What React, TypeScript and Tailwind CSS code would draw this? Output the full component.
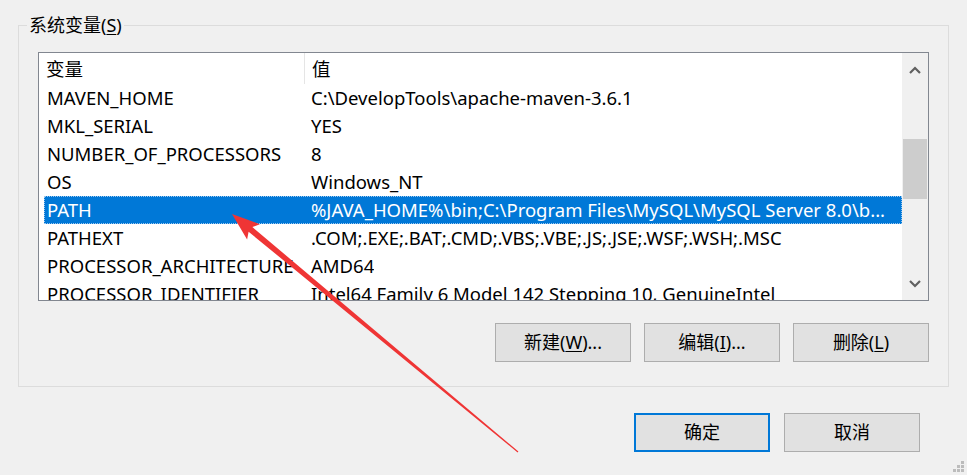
import React from 'react';

const rows: [string, string][] = [
  ['MAVEN_HOME', 'C:\\DevelopTools\\apache-maven-3.6.1'],
  ['MKL_SERIAL', 'YES'],
  ['NUMBER_OF_PROCESSORS', '8'],
  ['OS', 'Windows_NT'],
  ['PATH', '%JAVA_HOME%\\bin;C:\\Program Files\\MySQL\\MySQL Server 8.0\\b...'],
  ['PATHEXT', '.COM;.EXE;.BAT;.CMD;.VBS;.VBE;.JS;.JSE;.WSF;.WSH;.MSC'],
  ['PROCESSOR_ARCHITECTURE', 'AMD64'],
  ['PROCESSOR_IDENTIFIER', 'Intel64 Family 6 Model 142 Stepping 10, GenuineIntel'],
];

function Button({ children, primary }: { children: React.ReactNode; primary?: boolean }) {
  return (
    <button
      className={
        primary
          ? 'w-[136px] h-[39px] bg-[#e1e1e1] border-2 border-[#0078d7] text-[18px] text-black flex items-center justify-center'
          : 'w-[136px] h-[39px] bg-[#e1e1e1] border border-[#adadad] text-[18px] text-black flex items-center justify-center'
      }
    >
      {children}
    </button>
  );
}

export default function App() {
  return (
    <div
      className="relative w-[967px] h-[475px] bg-[#f0f0f0] overflow-hidden text-black"
      style={{ fontFamily: '"Noto Sans", "Noto Sans CJK SC", sans-serif' }}
    >
      {/* 系统变量 group box */}
      <fieldset className="ml-[18px] mt-[14px] w-[930px] h-[373px] border border-[#dcdcdc] px-[19px] pb-0 pt-0">
        <legend className="-ml-[11px] px-[2px] text-[18px] leading-[22px]">
          系统变量(<span className="underline underline-offset-2">S</span>)
        </legend>

        <div className="mt-[16px] w-[891px] h-[249px] border border-[#828790] bg-white flex overflow-hidden">
          <div className="flex-1 flex flex-col">
            <div className="h-[31px] shrink-0 flex text-[18.5px]">
              <div className="w-[266px] pl-[7px] flex items-center border-r border-[#e5e5e5]">变量</div>
              <div className="pl-[7px] flex items-center">值</div>
            </div>
            <div className="flex-1 overflow-hidden pl-[5px]">
              {rows.map(([k, v]) => {
                const sel = k === 'PATH';
                return (
                  <div
                    key={k}
                    className={
                      sel
                        ? 'h-[28px] flex items-center text-[18.5px] whitespace-nowrap bg-[#0078d7] text-white outline-1 outline-dotted outline-offset-[-1px] outline-[#9cc8f0]'
                        : 'h-[28px] flex items-center text-[18.5px] whitespace-nowrap'
                    }
                  >
                    <div className="w-[261px] pl-[3px] shrink-0 overflow-hidden">{k}</div>
                    <div className="pl-[6px] overflow-hidden">{v}</div>
                  </div>
                );
              })}
            </div>
          </div>

          {/* scrollbar */}
          <div className="w-[26px] shrink-0 bg-[#f0f0f0] flex flex-col items-center">
            <div className="h-[34px] w-full flex items-center justify-center">
              <svg width="12" height="8" viewBox="0 0 12 8">
                <path d="M1 7 L6 2 L11 7" stroke="#606060" strokeWidth="2.2" fill="none" />
              </svg>
            </div>
            <div className="mt-[52px] w-[24px] h-[60px] bg-[#cdcdcd]" />
            <div className="flex-1" />
            <div className="h-[32px] w-full flex items-center justify-center">
              <svg width="12" height="8" viewBox="0 0 12 8">
                <path d="M1 1 L6 6 L11 1" stroke="#606060" strokeWidth="2.2" fill="none" />
              </svg>
            </div>
          </div>
        </div>

        <div className="mt-[22px] w-[891px] flex justify-end gap-[13px]">
          <Button>
            新建(<span className="underline underline-offset-2">W</span>)...
          </Button>
          <Button>
            编辑(<span className="underline underline-offset-2">I</span>)...
          </Button>
          <Button>
            删除(<span className="underline underline-offset-2">L</span>)
          </Button>
        </div>
      </fieldset>

      <div className="mt-[26px] w-[920px] flex justify-end gap-[14px]">
        <Button primary>确定</Button>
        <Button>取消</Button>
      </div>

      {/* annotation arrow */}
      <svg className="absolute left-0 top-0 pointer-events-none" width="967" height="475">
        <polygon
          points="232,214 259.9,224.2 252.4,227.1 518.4,451.5 517.6,452.5 248.6,231.7 247.1,239.6"
          fill="#ef3535"
        />
      </svg>

      {/* size grip */}
      <svg className="absolute right-[2px] bottom-[2px]" width="12" height="12" viewBox="0 0 12 12">
        <rect x="8" y="0" width="3" height="3" fill="#bcbcbc" />
        <rect x="4" y="4" width="3" height="3" fill="#bcbcbc" />
        <rect x="8" y="4" width="3" height="3" fill="#bcbcbc" />
        <rect x="0" y="8" width="3" height="3" fill="#bcbcbc" />
        <rect x="4" y="8" width="3" height="3" fill="#bcbcbc" />
        <rect x="8" y="8" width="3" height="3" fill="#bcbcbc" />
      </svg>
    </div>
  );
}
